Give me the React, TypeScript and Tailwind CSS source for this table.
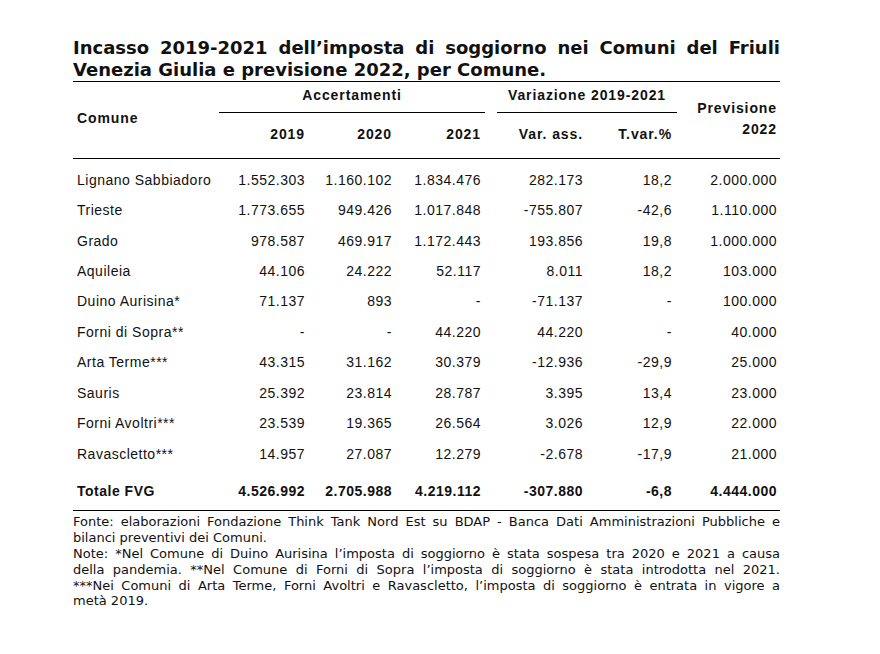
const rows = [
  ["Lignano Sabbiadoro", "1.552.303", "1.160.102", "1.834.476", "282.173", "18,2", "2.000.000"],
  ["Trieste", "1.773.655", "949.426", "1.017.848", "-755.807", "-42,6", "1.110.000"],
  ["Grado", "978.587", "469.917", "1.172.443", "193.856", "19,8", "1.000.000"],
  ["Aquileia", "44.106", "24.222", "52.117", "8.011", "18,2", "103.000"],
  ["Duino Aurisina*", "71.137", "893", "-", "-71.137", "-", "100.000"],
  ["Forni di Sopra**", "-", "-", "44.220", "44.220", "-", "40.000"],
  ["Arta Terme***", "43.315", "31.162", "30.379", "-12.936", "-29,9", "25.000"],
  ["Sauris", "25.392", "23.814", "28.787", "3.395", "13,4", "23.000"],
  ["Forni Avoltri***", "23.539", "19.365", "26.564", "3.026", "12,9", "22.000"],
  ["Ravascletto***", "14.957", "27.087", "12.279", "-2.678", "-17,9", "21.000"],
];

const total = ["Totale FVG", "4.526.992", "2.705.988", "4.219.112", "-307.880", "-6,8", "4.444.000"];

const cols = "grid grid-cols-[150px_78px_87px_89px_102px_89px_105px] pl-[4px]";

function Row({ cells, bold }: { cells: string[]; bold?: boolean }) {
  return (
    <div className={`${cols} items-center ${bold ? "h-[41px] pt-[3px] font-bold" : "h-[30.44px]"}`}>
      {cells.map((c, i) => (
        <div key={i} className={i === 0 ? "text-left" : "text-right"}>
          {c}
        </div>
      ))}
    </div>
  );
}

export default function App() {
  return (
    <div className="w-[880px] h-[654px] bg-white text-[#111]">
      <div className="ml-[73px] w-[707px] pt-[37px]">
        <div className="font-['DejaVu_Sans',sans-serif] font-bold text-[18px] leading-[22px] pb-[0px] border-b border-black">
          <div className="text-justify [text-align-last:justify]">
            Incasso 2019-2021 dell’imposta di soggiorno nei Comuni del Friuli
          </div>
          <div>Venezia Giulia e previsione 2022, per Comune.</div>
        </div>

        <div className="font-['Liberation_Sans',Arial,sans-serif] text-[14px] tracking-[0.5px]">
          {/* header */}
          <div className="grid grid-cols-[146px_266px_12px_180px_1fr] h-[77px] border-b border-black font-bold tracking-[0.9px] leading-[16px]">
            <div className="pl-[4px] pt-[28px]">Comune</div>
            <div className="flex flex-col pt-[5px]">
              <div className="text-center">Accertamenti</div>
              <div className="mt-[9px] border-t border-black" />
              <div className="grid grid-cols-[86px_87px_89px] pt-[13px]">
                <div className="text-right">2019</div>
                <div className="text-right">2020</div>
                <div className="text-right">2021</div>
              </div>
            </div>
            <div />
            <div className="flex flex-col pt-[5px]">
              <div className="text-center">Variazione 2019-2021</div>
              <div className="mt-[9px] border-t border-black" />
              <div className="grid grid-cols-[86px_89px] pt-[13px]">
                <div className="text-right">Var. ass.</div>
                <div className="text-right">T.var.%</div>
              </div>
            </div>
            <div className="pt-[16px] pr-[3px] text-right leading-[21px]">
              <div>Previsione</div>
              <div>2022</div>
            </div>
          </div>

          <div className="pt-[6px]">
            {rows.map((r, i) => (
              <Row key={i} cells={r} />
            ))}
          </div>
          <div className="border-b border-black">
            <Row cells={total} bold />
          </div>
        </div>

        <div className="font-['DejaVu_Sans',sans-serif] text-[13px] leading-[15.8px] pt-[3px] text-[#111]">
          <div className="text-justify [text-align-last:justify]">
            Fonte: elaborazioni Fondazione Think Tank Nord Est su BDAP - Banca Dati Amministrazioni Pubbliche e
          </div>
          <div>bilanci preventivi dei Comuni.</div>
          <div className="text-justify [text-align-last:justify]">
            Note: *Nel Comune di Duino Aurisina l’imposta di soggiorno è stata sospesa tra 2020 e 2021 a causa
          </div>
          <div className="text-justify [text-align-last:justify]">
            della pandemia. **Nel Comune di Forni di Sopra l’imposta di soggiorno è stata introdotta nel 2021.
          </div>
          <div className="text-justify [text-align-last:justify]">
            ***Nei Comuni di Arta Terme, Forni Avoltri e Ravascletto, l’imposta di soggiorno è entrata in vigore a
          </div>
          <div>metà 2019.</div>
        </div>
      </div>
    </div>
  );
}
